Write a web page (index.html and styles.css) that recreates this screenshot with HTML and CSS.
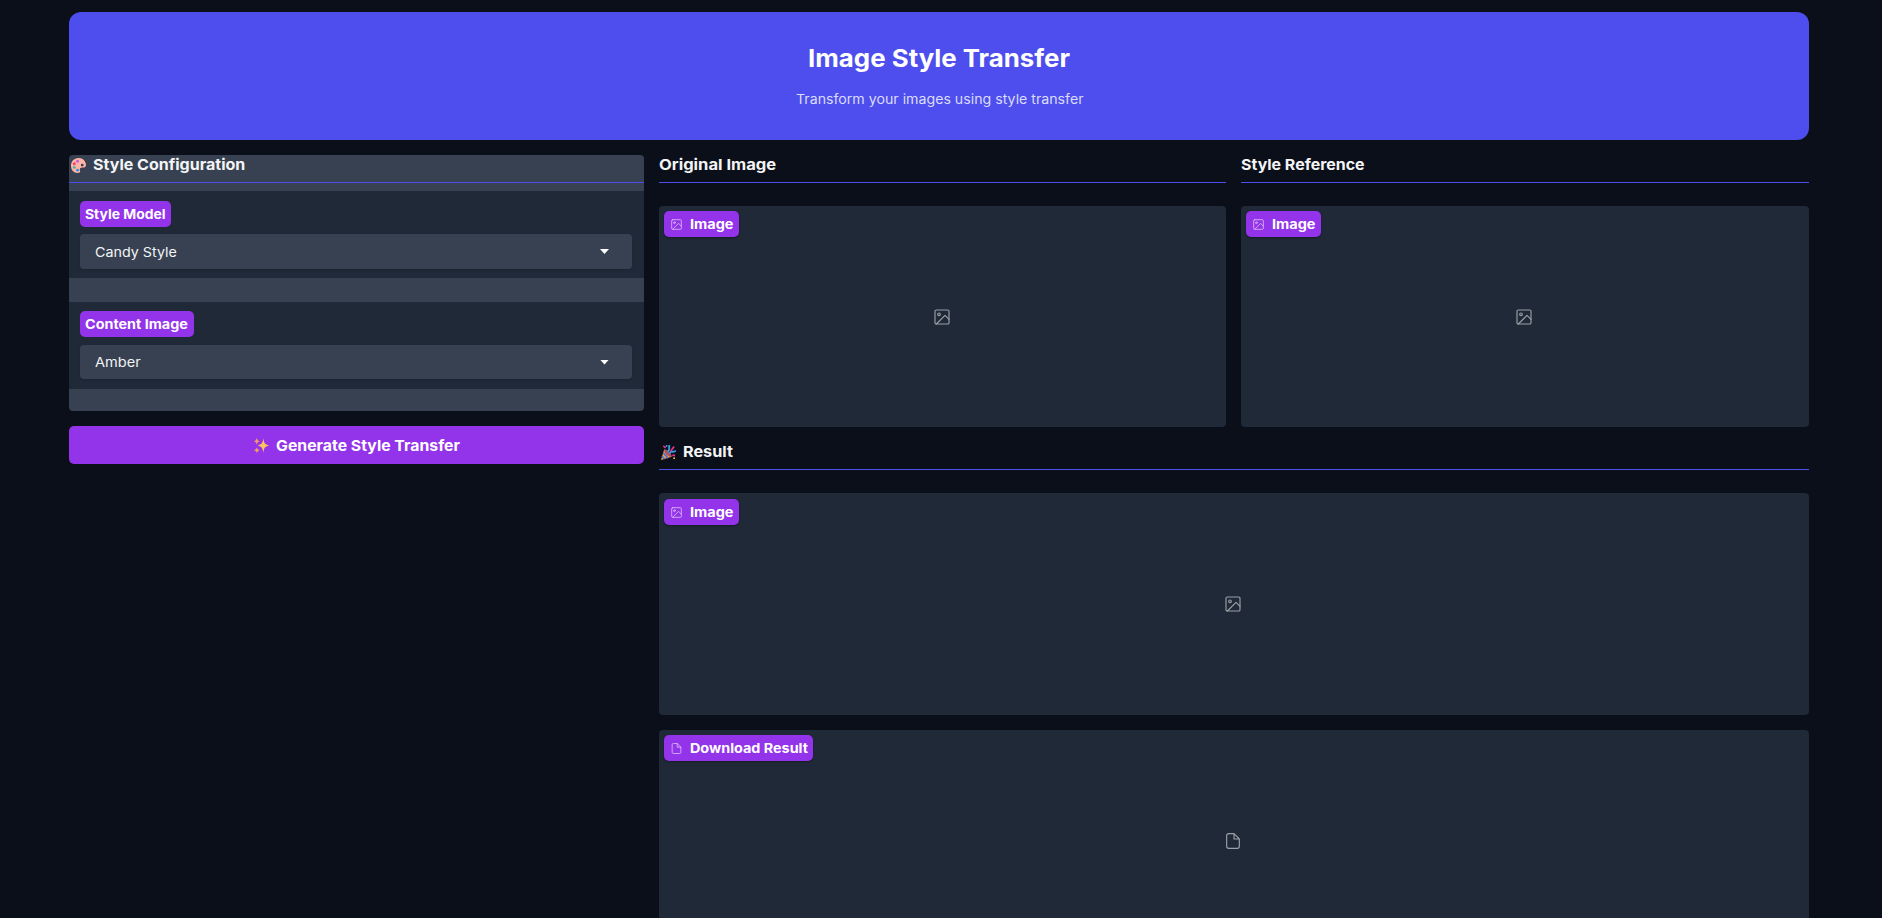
FILE: index.html
```html
<!DOCTYPE html>
<html lang="en">
<head>
<meta charset="utf-8">
<title>Image Style Transfer</title>
<link rel="stylesheet" href="styles.css">
</head>
<body>
<svg width="0" height="0" class="defs">
  <symbol id="image" viewBox="0 0 24 24" fill="none" stroke="currentColor" stroke-width="1.7" stroke-linecap="round" stroke-linejoin="round"><rect x="1.5" y="1.5" width="21" height="21" rx="2"/><circle cx="7.5" cy="8" r="2"/><path d="M22.500 15.500 16.500 9.500 3.500 22.500"/></symbol>
  <symbol id="file" viewBox="0 0 24 24" fill="none" stroke="currentColor" stroke-width="1.7" stroke-linecap="round" stroke-linejoin="round"><path d="M13.500 1H5.500a3 3 0 0 0-3 3v16a3 3 0 0 0 3 3h13a3 3 0 0 0 3-3V9L13.500 1V9h8"/></symbol>
</svg>
<main class="app">
  <header class="hero">
    <h1><span class="t t-title">Image Style Transfer</span></h1>
    <p><span class="t t-sub">Transform your images using style transfer</span></p>
  </header>
  <div class="layout">
    <section class="left">
      <div class="config">
        <h3 class="heading"><svg class="emoji" viewBox="0 0 16 16"><path d="M8 0C3 0 0 4 0 8c0 5 3 8 7 8 3 0 3-1 2.500-3-.4-2 .5-3 2.500-3h2c3-1 2-4 1-6-1.500-3-4-4-7-4z" fill="#ffb5a5"/><circle cx="7" cy="3.500" r="1.500" fill="#c659dc"/><circle cx="3.500" cy="6" r="1.600" fill="#ef3e7b"/><circle cx="3.500" cy="10" r="1.500" fill="#4fb3ac"/><circle cx="7" cy="13" r="1.500" fill="#2f91e8"/><circle cx="12" cy="7.500" r="1.500" fill="#35404f"/></svg><span class="t t-conf">Style Configuration</span></h3>
        <div class="field first">
          <div class="tag"><span class="t t-model">Style Model</span></div>
          <div class="select tall"><span class="t t-candy">Candy Style</span><i class="arrow"></i></div>
        </div>
        <div class="field second">
          <div class="tag"><span class="t t-content">Content Image</span></div>
          <div class="select"><span class="t t-amber">Amber</span><i class="arrow"></i></div>
        </div>
      </div>
      <button class="generate"><svg class="emoji" viewBox="0 0 16 16"><path d="M10 0C10.500 5 11.500 7 16 8c-4.500 1-5.500 3-6 8-.7-5-1.800-7-6-8 4.200-1 5.300-3 6-8z" fill="#ffc45b"/><path d="M3 0 4 2.500 6 3.500 4 4.500 3 7 2 4.500 0 3.500 2 2.500zM3 10 4 12 6 13 4 14 3 16 2 14 0 13 2 12z" fill="#f99b62"/></svg><span class="t t-gen">Generate Style Transfer</span></button>
    </section>
    <section class="right">
      <div class="pair">
        <div>
          <h3 class="heading"><span class="t t-orig">Original Image</span></h3>
          <div class="block"><div class="tag icon-tag"><svg><use href="#image"/></svg><span class="t t-image">Image</span></div><svg class="empty"><use href="#image"/></svg></div>
        </div>
        <div>
          <h3 class="heading"><span class="t t-ref">Style Reference</span></h3>
          <div class="block"><div class="tag icon-tag"><svg><use href="#image"/></svg><span class="t t-image">Image</span></div><svg class="empty"><use href="#image"/></svg></div>
        </div>
      </div>
      <h3 class="heading result"><svg class="emoji" viewBox="0 0 16 16"><path d="M3.500 4.500 0 16 11.500 12.500z" fill="#f6a43c"/><path d="M2.500 8.500 7.500 14M1 12 4 15" stroke="#4b6fd8" stroke-width="1.800"/><path d="M3.500 4.500c3.500 0 8 4.500 8 8-3.500 1-9-4.500-8-8z" fill="#a8526a"/><path d="M7 7C10 6 8 3 9 0M9 9c2-4 4 0 7-3" stroke="#2fa4e7" stroke-width="2" fill="none"/><path d="M10 7 14 1.500M2.500 1 5 3M12 11h3" stroke="#e8368f" stroke-width="1.800"/><circle cx="14" cy="14" r="1" fill="#ffc45b"/><circle cx="6" cy="1" r="1" fill="#2fa4e7"/></svg><span class="t t-result">Result</span></h3>
      <div class="block"><div class="tag icon-tag"><svg><use href="#image"/></svg><span class="t t-image">Image</span></div><svg class="empty"><use href="#image"/></svg></div>
      <div class="block download"><div class="tag icon-tag"><svg><use href="#file"/></svg><span class="t t-down">Download Result</span></div><svg class="empty"><use href="#file"/></svg></div>
    </section>
  </div>
</main>
</body>
</html>
```
FILE: styles.css
```css
* { box-sizing: border-box; }
html, body { height: 918px; overflow: hidden; }
body { margin: 0; background: #0b0f19; color: #f3f4f6; font-family: Inter, "Open Sans", sans-serif; }
.defs { position: absolute; }
.app { padding: 12px 73px 0 69px; }
.hero { height: 128px; border-radius: 12px; background: #4d4eed; text-align: center; color: #fff; padding-top: 31px; }
h1 { margin: 0; font-size: 24.500px; line-height: 30px; font-weight: 700; }
.hero p { margin: 16px 0 0; font-size: 13px; line-height: 20px; color: #dcdcfb; }
.layout { display: grid; grid-template-columns: 575px 1fr; gap: 15px; margin-top: 15px; }
.config { height: 256px; background: #374151; border-radius: 4px; overflow: hidden; }
.heading { margin: 0; height: 28px; border-bottom: 1px solid #4d4eed; font-size: 15px; line-height: 20px; font-weight: 700; display: flex; align-items: flex-start; }
.heading .emoji { margin: 3px 7px 0 2px; }
.emoji { width: 15px; height: 15px; flex: none; }
.field { background: #1f2937; padding: 9px 12px 0 11px; }
.first { margin-top: 8px; height: 87px; padding-top: 10px; }
.second { margin-top: 24px; height: 87px; }
.tag { display: flex; align-items: center; width: max-content; height: 26px; padding: 0 5px; border-radius: 5px; background: #9333ea; color: #fff; font-size: 13px; font-weight: 700; }
.select { margin-top: 8px; height: 34px; padding: 0 23px 0 15px; display: flex; align-items: center; justify-content: space-between; border-radius: 4px; background: #374151; font-size: 13px; box-shadow: 0 1px 2px #0002; }
.tall { margin-top: 7px; height: 35px; }
.arrow { width: 9px; height: 5px; background: #fff; clip-path: polygon(0 0, 100% 0, 50% 100%); }
.generate { width: 100%; height: 38px; margin: 15px 0 0; border: 0; border-radius: 5px; background: #9333ea; color: #fff; font: 700 15px Inter, sans-serif; display: flex; align-items: center; justify-content: center; gap: 7px; }
.pair { display: grid; grid-template-columns: 567px 568px; gap: 15px; }
.block { position: relative; height: 221px; margin-top: 23px; padding: 5px; border-radius: 4px; background: #1f2937; }
.result { margin-top: 15px; height: 28px; }
.result + .block { height: 222px; padding-top: 6px; }
.download { margin-top: 15px; }
.icon-tag { gap: 8px; padding-left: 7px; box-shadow: 0 1px 2px #0005; }
.icon-tag svg { width: 11px; height: 11px; color: #e3c5fa; }
.empty { position: absolute; left: calc(50% - 1px); top: 50%; width: 16px; height: 16px; transform: translate(-50%, -50%); color: #9ca0a7; }
/* Wide letterforms */
.t { display: inline-block; flex: none; text-align: left; white-space: nowrap; transform-origin: 0 50%; }
.t-title { width: 262px; transform: scaleX(1.055); }
.t-sub { width: 287px; transform: scaleX(1.09); }
.t-conf { width: 152px; transform: scaleX(1.068); }
.t-model { width: 81px; transform: scaleX(1.07); }
.t-content { width: 104px; transform: scaleX(1.105); }
.t-candy { width: 82px; transform: scaleX(1.1); }
.t-amber { width: 46px; transform: scaleX(1.12); }
.t-gen { width: 184px; transform: scaleX(1.055); }
.t-orig { width: 117px; transform: scaleX(1.105); }
.t-ref { width: 123px; transform: scaleX(1.063); }
.t-image { width: 44px; transform: scaleX(1.115); }
.t-result { width: 50px; transform: scaleX(1.08); }
.t-down { width: 118px; transform: scaleX(1.105); }
```
